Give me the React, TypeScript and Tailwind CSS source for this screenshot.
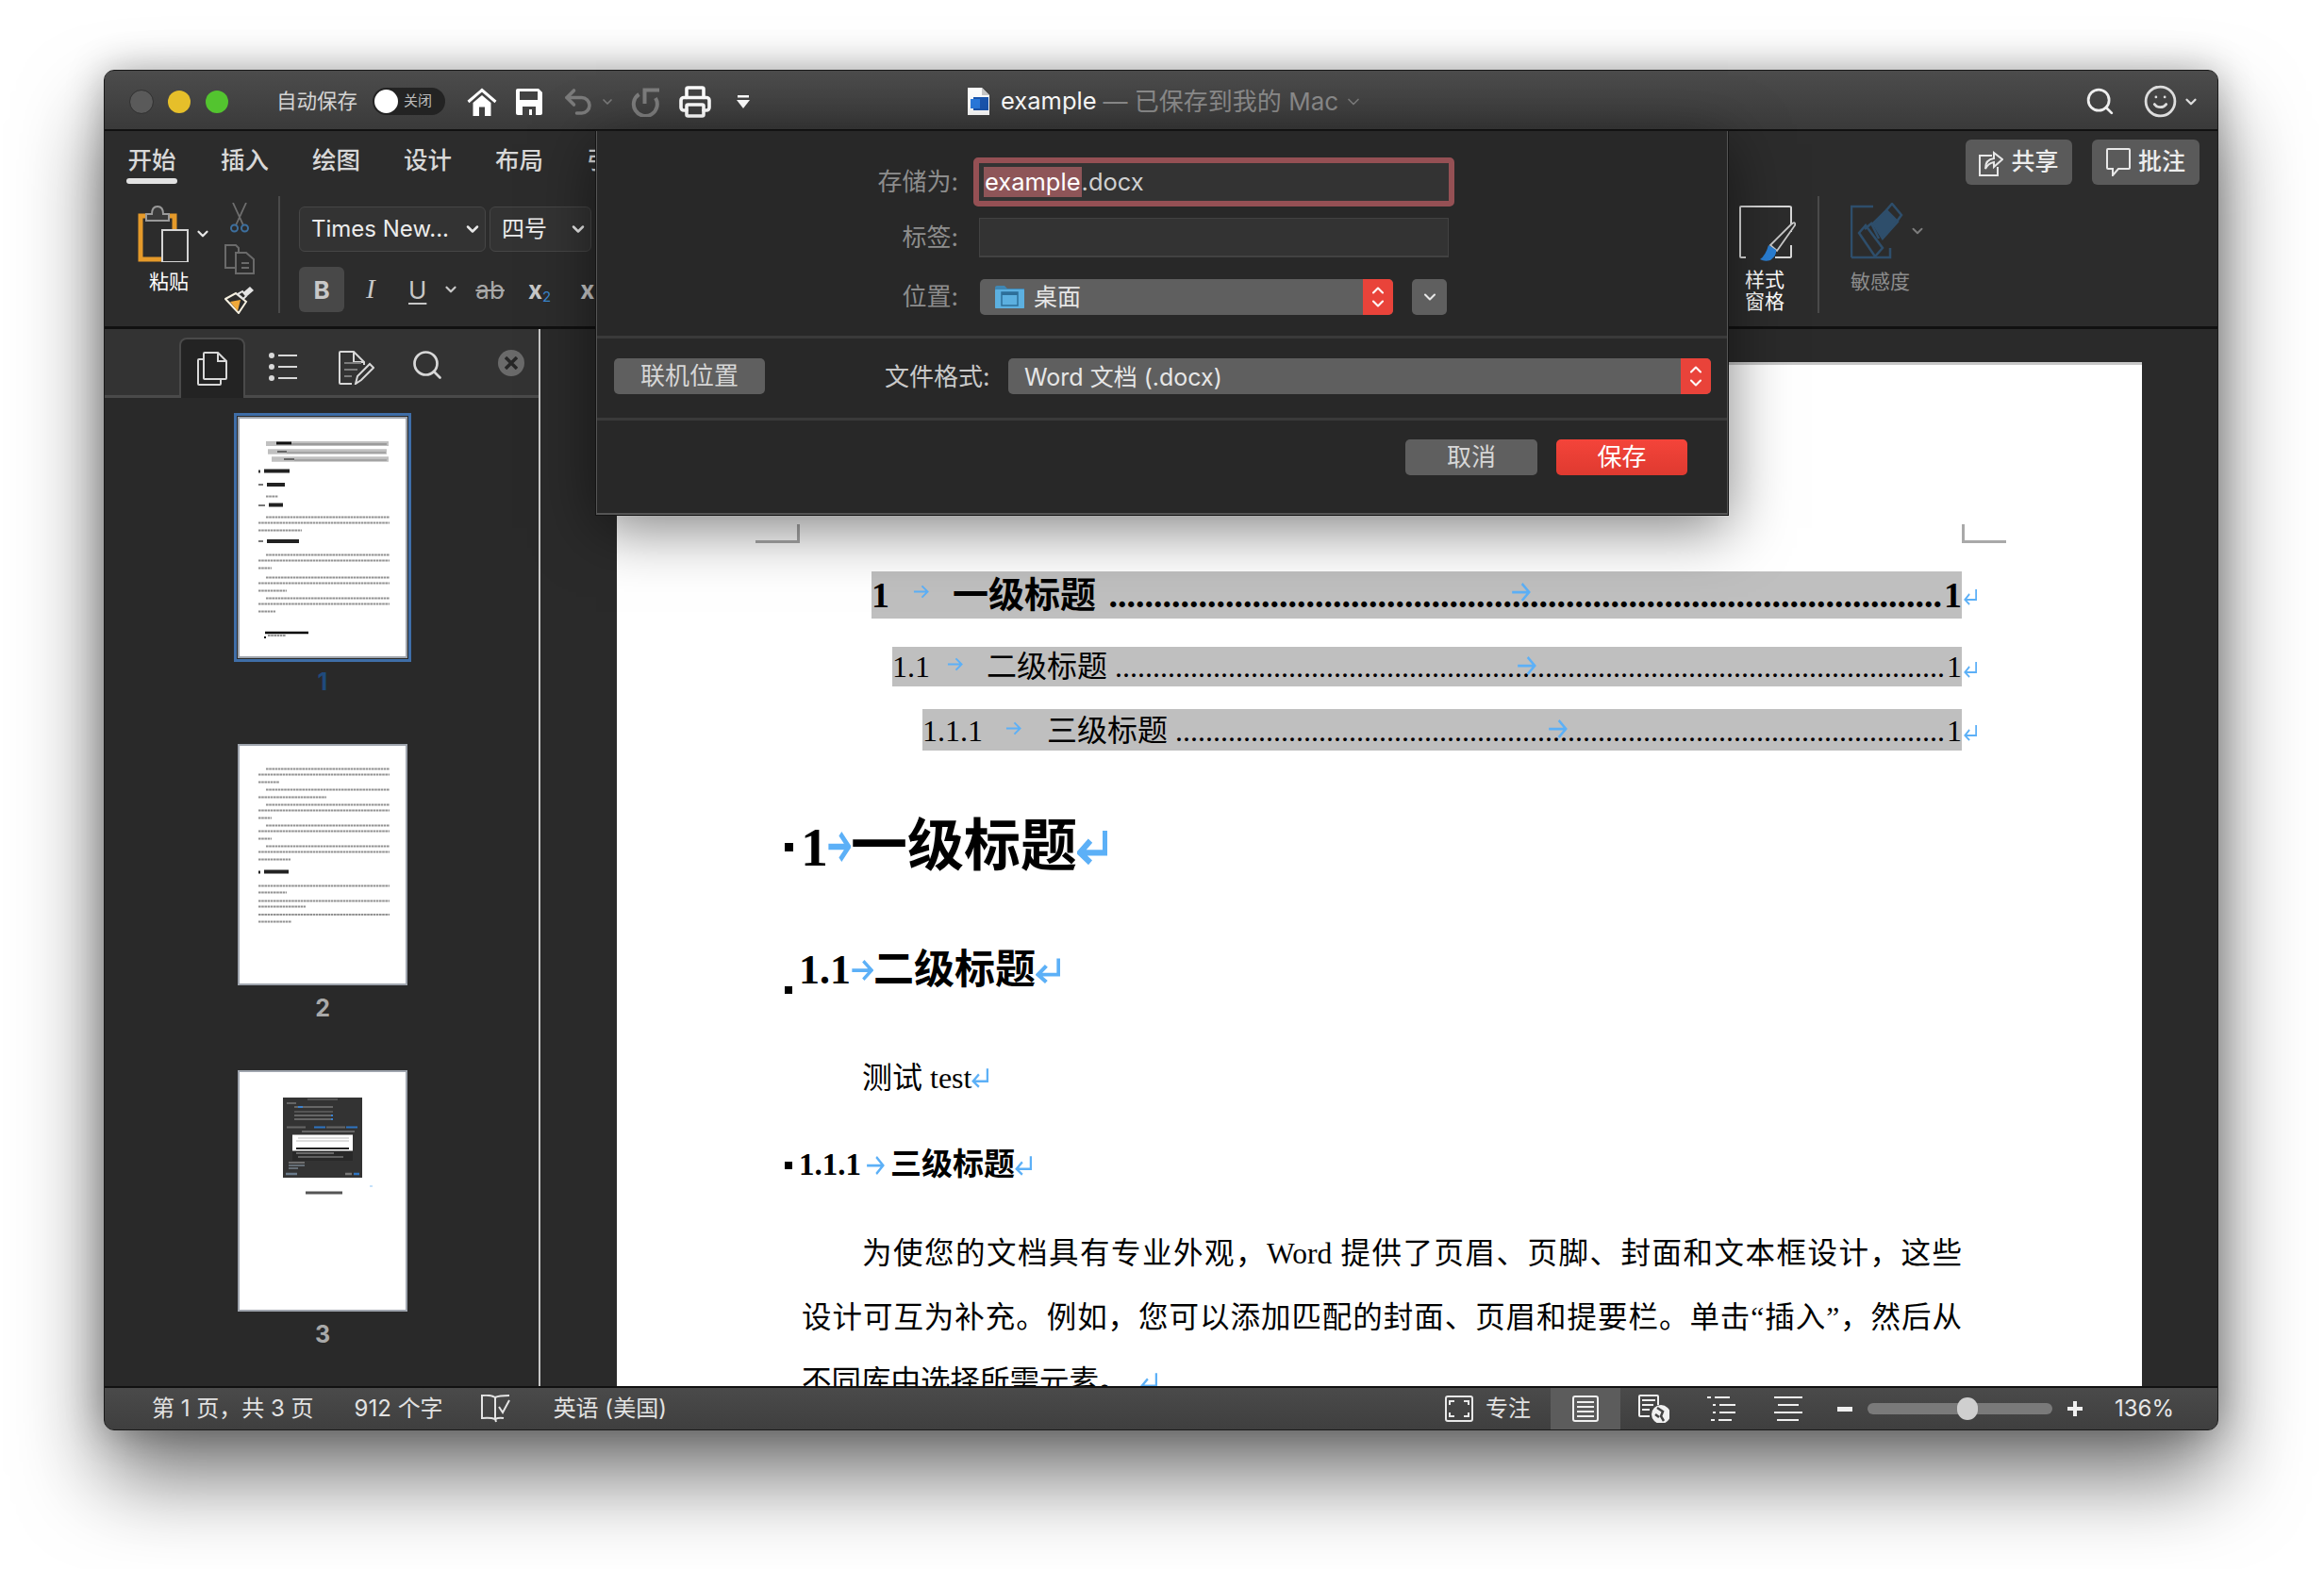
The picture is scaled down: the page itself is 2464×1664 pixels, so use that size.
import { ChevronDown, ChevronUp, Printer, Search, Smile, Undo2 } from "lucide-react";

const UI_FONT = "font-['Inter','Noto_Sans_CJK_SC',sans-serif]";
const DOC_FONT = "font-['Liberation_Serif','Noto_Sans_CJK_SC',serif]";

function TabArrow({ w = 18, h = 16, sw = 2 }: { w?: number; h?: number; sw?: number }) {
  return (
    <svg width={w} height={h} viewBox="0 0 18 16" className="shrink-0" fill="none" stroke="#5cb0f7" strokeWidth={sw} preserveAspectRatio="none">
      <path d="M1 8H16M10 1.5L16.5 8L10 14.5" />
    </svg>
  );
}

function ReturnArrow({ w = 16, h = 18, sw = 2 }: { w?: number; h?: number; sw?: number }) {
  return (
    <svg width={w} height={h} viewBox="0 0 16 18" className="shrink-0" fill="none" stroke="#5cb0f7" strokeWidth={sw} preserveAspectRatio="none">
      <path d="M15 1V12H2M7 6L1.5 12L7 17" />
    </svg>
  );
}

function HomeIcon() {
  return (
    <svg width="32" height="30" viewBox="0 0 32 30" className="shrink-0">
      <path d="M1.5 15L16 2.5L30.5 15" fill="none" stroke="#fff" strokeWidth="3" />
      <path d="M6.5 16L16 8L25.500 16V30H19V20.500H13V30H6.500Z" fill="#fff" />
    </svg>
  );
}

function SaveIcon() {
  return (
    <svg width="28" height="28" viewBox="0 0 28 28" className="shrink-0">
      <path d="M2 0H24L28 4V26A2 2 0 0 1 26 28H2A2 2 0 0 1 0 26V2A2 2 0 0 1 2 0Z" fill="#fff" />
      <rect x="4" y="3" width="19" height="9" fill="#424242" />
      <rect x="7" y="19" width="14" height="9" fill="#424242" />
      <rect x="14" y="22" width="3" height="6" fill="#fff" />
    </svg>
  );
}

function RedoIcon() {
  return (
    <svg width="32" height="32" viewBox="0 0 32 32" fill="none" stroke="#7d7d7d" strokeWidth="4" className="shrink-0">
      <path d="M31 3.500H15.500V18" />
      <path d="M9.500 8A12.500 12.500 0 1 0 27 12" />
    </svg>
  );
}

function DocIcon() {
  return (
    <svg width="23" height="29" viewBox="0 0 23 29" className="shrink-0">
      <path d="M0 0H15L23 8V29H0Z" fill="#fff" />
      <path d="M15 0L23 8H15Z" fill="#c9c9c9" />
      <rect x="6" y="10" width="16" height="14" fill="#1a56b0" />
      <rect x="3" y="12" width="10" height="10" fill="#2a7be0" />
    </svg>
  );
}

function PasteIcon() {
  return (
    <svg width="54" height="60" viewBox="0 0 54 60" className="shrink-0">
      <path d="M3 11H39V57H3Z" fill="none" stroke="#e59a2a" strokeWidth="5" />
      <path d="M9 16V9H15Q15 1 21 1Q27 1 27 9H33V16Z" fill="#3a3a3a" stroke="#9a9a9a" strokeWidth="2" />
      <rect x="26" y="26" width="27" height="34" fill="#2c2c2c" stroke="#d4d4d4" strokeWidth="2" />
    </svg>
  );
}

function ScissorsIcon() {
  return (
    <svg width="20" height="32" viewBox="0 0 20 32" fill="none" className="shrink-0">
      <path d="M3 0L14 24M17 0L6 24" stroke="#6e6e6e" strokeWidth="1.800" />
      <circle cx="4.500" cy="27" r="3.500" stroke="#3d6f9e" strokeWidth="2" />
      <circle cx="15.500" cy="27" r="3.500" stroke="#3d6f9e" strokeWidth="2" />
    </svg>
  );
}

function CopyIcon() {
  return (
    <svg width="32" height="32" viewBox="0 0 32 32" fill="none" stroke="#6a6a6a" strokeWidth="2" className="shrink-0">
      <path d="M12 25H1V1H12L15 4V9" />
      <path d="M12 9H23L31 16V31H12Z" fill="#2c2c2c" />
      <path d="M18 20H26M18 25H26" />
    </svg>
  );
}

function BrushIcon() {
  return (
    <svg width="32" height="30" viewBox="0 0 32 30" fill="none" className="shrink-0">
      <path d="M1 14L12 8L23 17L15 29Z" fill="#2c2c2c" stroke="#f5f0e0" strokeWidth="2" />
      <path d="M6 17L17 15L14 27Z" fill="#f0a93a" />
      <path d="M14 9L20 14L23 11L19 6Z" fill="#2c2c2c" stroke="#e4e4e4" strokeWidth="2" />
      <path d="M20 7L27 1L31 5L24 11Z" fill="#e4e4e4" />
    </svg>
  );
}

function StylePaneIcon() {
  return (
    <svg width="60" height="60" viewBox="0 0 60 60" fill="none" className="shrink-0">
      <path d="M7 55H2Q1 55 1 54V2Q1 1 2 1H53Q55 1 55 2V28M55 42V54Q55 55 53 55H38" stroke="#d8d8d8" strokeWidth="2" />
      <path d="M33 42L55 20Q60 16 59 21L40 48Z" fill="#2c2c2c" stroke="#c9c9c9" strokeWidth="1.800" />
      <path d="M31 42L39 47Q40 53 33 58Q27 60 22 57Q28 53 31 42Z" fill="#2a7fd4" />
    </svg>
  );
}

function SensitivityIcon() {
  return (
    <svg width="56" height="60" viewBox="0 0 56 60" fill="none" stroke="#2e4e6b" strokeWidth="2.500" className="shrink-0">
      <path d="M1 58H42V48M24 4H1V58" />
      <path d="M9 32L16 24L34 48L26 57Z" />
      <path d="M15 28L22 22L30 38" />
      <path d="M24 22L38 8L50 20L34 38Z" fill="#2e4e6b" />
      <path d="M38 8L44 1L54 13L49 20" />
    </svg>
  );
}

function PagesIcon() {
  return (
    <svg width="32" height="36" viewBox="0 0 32 36" fill="none" stroke="#d8d8d8" strokeWidth="2" className="shrink-0">
      <path d="M7 8H2Q1 8 1 9V34Q1 35 2 35H24Q25 35 25 34V29" />
      <path d="M8 1H22L31 10V28Q31 29 30 29H9Q7 29 7 28V2Q7 1 8 1Z" />
      <path d="M22 1V10H31" />
    </svg>
  );
}

function OutlineListIcon() {
  return (
    <svg width="30" height="32" viewBox="0 0 30 32" fill="#d8d8d8" className="shrink-0">
      <circle cx="3" cy="4" r="3" />
      <circle cx="3" cy="16" r="3" />
      <circle cx="3" cy="28" r="3" />
      <rect x="10" y="3" width="20" height="2" />
      <rect x="10" y="15" width="20" height="2" />
      <rect x="10" y="27" width="20" height="2" />
    </svg>
  );
}

function ReviewIcon() {
  return (
    <svg width="38" height="36" viewBox="0 0 38 36" fill="none" stroke="#d8d8d8" strokeWidth="2" className="shrink-0">
      <path d="M14 35H2Q1 35 1 34V2Q1 1 2 1H16L27 12V15" />
      <path d="M16 1V12H27" />
      <path d="M6 13H24M6 20H20M6 27H14" stroke="#7c7c7c" />
      <path d="M18 35L20 27L33 14L37 18L24 31Z" />
    </svg>
  );
}

function BookCheckIcon() {
  return (
    <svg width="31" height="30" viewBox="0 0 31 30" fill="none" stroke="#e4e4e4" strokeWidth="2" className="shrink-0">
      <path d="M15 26V3Q10 0 1 1V25Q10 24 15 26L16 29" />
      <path d="M15 3Q19 1 30 1M15 26Q19 24 24 25" />
      <path d="M19 13L23 19L30 6" />
    </svg>
  );
}

function FocusIcon() {
  return (
    <svg width="30" height="28" viewBox="0 0 30 28" fill="none" stroke="#e8e8e8" strokeWidth="2" className="shrink-0">
      <rect x="1" y="1" width="28" height="26" rx="2" />
      <path d="M5 10V6H10M20 6H25V10M25 18V22H20M10 22H5V18" />
    </svg>
  );
}

function PageViewIcon() {
  return (
    <svg width="28" height="28" viewBox="0 0 28 28" fill="none" stroke="#f0f0f0" strokeWidth="2" className="shrink-0">
      <rect x="1" y="1" width="26" height="26" rx="2" />
      <path d="M5 7H23M5 12H23M5 17H23M5 22H23" />
    </svg>
  );
}

function WebViewIcon() {
  return (
    <svg width="33" height="30" viewBox="0 0 33 30" fill="none" stroke="#f0f0f0" strokeWidth="2" className="shrink-0">
      <path d="M12 23H2Q1 23 1 22V2Q1 1 2 1H20Q21 1 21 2V11" />
      <path d="M4 6H18M4 11H16M4 16H12" />
      <circle cx="24" cy="21" r="9" fill="#f0f0f0" />
      <path d="M20 14L26 18L24 23L27 28M18 21L22 24" stroke="#444" strokeWidth="2.500" />
    </svg>
  );
}

function OutlineViewIcon() {
  return (
    <svg width="30" height="28" viewBox="0 0 30 28" fill="#f0f0f0" className="shrink-0">
      <rect x="0" y="1" width="4" height="2" />
      <rect x="8" y="1" width="16" height="2" />
      <rect x="6" y="9" width="3" height="2" />
      <rect x="13" y="9" width="17" height="2" />
      <rect x="6" y="17" width="3" height="2" />
      <rect x="13" y="17" width="17" height="2" />
      <rect x="4" y="25" width="4" height="2" />
      <rect x="12" y="25" width="14" height="2" />
    </svg>
  );
}

function DraftViewIcon() {
  return (
    <svg width="30" height="28" viewBox="0 0 30 28" fill="#f0f0f0" className="shrink-0">
      <rect x="0" y="1" width="30" height="2" />
      <rect x="4" y="9" width="22" height="2" />
      <rect x="0" y="17" width="30" height="2" />
      <rect x="3" y="25" width="23" height="2" />
    </svg>
  );
}

function Stepper() {
  return (
    <div className="w-[32px] h-full bg-[#e9433a] rounded-r-[5px] flex flex-col items-center justify-center text-white">
      <ChevronUp size={20} strokeWidth={2.5} className="-mb-[3px]" />
      <ChevronDown size={20} strokeWidth={2.5} className="-mt-[3px]" />
    </div>
  );
}

function Sel({ label, value }: { label: string; value: string }) {
  return (
    <div className={`h-[48px] border border-[#464646] bg-[#333333] rounded-[6px] flex items-center justify-between pl-[12px] pr-[3px] text-[24px] text-[#ececec] ${label}`}>
      <span className="whitespace-nowrap">{value}</span>
      <ChevronDown size={20} strokeWidth={3} className="text-[#e8e8e8]" />
    </div>
  );
}

type Seg = [number, number, number, string?, number?];

function Thumb({ segs }: { segs: Seg[] }) {
  return (
    <svg width="176" height="252" viewBox="0 0 176 252" className="block bg-white">
      {segs.map(([x1, x2, y, color, sw], i) => (
        <line
          key={i}
          x1={x1}
          x2={x2}
          y1={y}
          y2={y}
          stroke={color ?? "#929292"}
          strokeWidth={sw ?? 2}
          strokeDasharray={color ? undefined : "2.600 0.600"}
        />
      ))}
    </svg>
  );
}

const para = (ys: number[], last: number, x0 = 28): Seg[] =>
  ys.map((y, i) => [i === 0 ? x0 : 20, i === ys.length - 1 ? last : 159, y] as Seg);

const THUMB_1: Seg[] = [
  [28, 158, 26.5, "#c0c0c0", 5],
  [30, 156, 35, "#c0c0c0", 5.500],
  [34, 158, 43, "#c0c0c0", 5.500],
  [39, 55, 26, "#111", 3],
  [55, 156, 27, "#777", 1],
  [40, 50, 35, "#666", 2],
  [50, 155, 36, "#888", 1],
  [47, 58, 43, "#666", 2],
  [58, 156, 44, "#888", 1],
  [20, 22, 56, "#333", 3],
  [26, 53, 55.500, "#222", 4],
  [20, 25, 70, "#777", 2],
  [29, 48, 70, "#222", 4],
  [28, 41, 82.500],
  [20, 27, 92, "#777", 2],
  [31, 46, 91.500, "#222", 4],
  ...para([104.500, 110.500, 118.500], 66),
  [20, 25, 130, "#777", 2],
  [29, 63, 130, "#222", 4],
  ...para([144.500, 150.500, 158.500], 34),
  ...para([168.500, 174.500, 182.500], 50),
  ...para([190.500, 196.500, 204.500], 38),
  [27, 73, 227, "#000", 2.300],
  [26, 28, 232, "#000", 2],
  [30, 49, 230],
];

const THUMB_2: Seg[] = [
  ...para([24.500, 30.500, 38.500], 42),
  ...para([46.500, 54.500], 92),
  ...para([62.500, 68.500, 76.500], 34),
  ...para([84.500, 90.500, 98.500], 34),
  ...para([106.500, 112.500, 120.500], 54),
  [20, 22, 134, "#222", 3],
  [26, 52, 133.500, "#222", 4],
  ...para([148.500, 155.500], 50, 20),
  ...para([164.500, 170.500], 70, 20),
  ...para([179, 186.500], 55, 20),
];

const THUMB_3: Seg[] = [
  [46, 130, 69.500, "#333333", 85],
  [72, 104, 29, "#555", 2],
  [50, 60, 33, "#999", 1],
  [58, 99, 37, "#666", 2],
  [62, 67, 37, "#3b82d0", 2],
  [58, 99, 42, "#555", 2],
  [58, 99, 46, "#666", 2],
  [58, 99, 50, "#666", 2],
  [97, 99, 46, "#3b82d0", 2],
  [97, 99, 50, "#3b82d0", 2],
  [50, 70, 58.500, "#666", 2],
  [79, 91, 58.500, "#2f74c0", 2],
  [92, 112, 58.500, "#666", 2],
  [113, 125, 58.500, "#2f74c0", 2],
  [66, 122, 63, "#666", 2],
  [56, 120, 75, "#fff", 17],
  [62, 116, 70, "#bbb", 1],
  [60, 116, 73, "#bbb", 1],
  [60, 116, 81, "#222", 2],
  [56, 120, 89, "#292929", 10],
  [60, 100, 86, "#aaa", 1],
  [62, 110, 90, "#999", 1],
  [52, 69, 96, "#aaa", 1],
  [52, 69, 99, "#9ab", 1],
  [52, 62, 102, "#9ab", 1],
  [49, 61, 108, "#6a7a8a", 2.500],
  [112, 119, 108, "#777", 2.500],
  [121, 127, 108, "#2f74c0", 2.500],
  [70, 109, 128, "#555", 3],
  [138, 141, 121, "#8cc4f4", 1],
];

function Thumbnail({ segs, num, active }: { segs: Seg[]; num: string; active?: boolean }) {
  return (
    <div className="flex flex-col items-center">
      <div className={active ? "border-2 border-[#3f6ea8] p-[1px] -m-[3px]" : ""}>
        <div className={active ? "border border-[#3f6ea8] p-[1px] -m-[1px]" : ""}>
          <div className="border-2 border-[#9fa5ae]">
            <Thumb segs={segs} />
          </div>
        </div>
      </div>
      <div className={`mt-[8px] h-[32px] leading-[32px] text-[25px] font-bold ${active ? "text-[#1f4a7c]" : "text-[#a9a9a9]"}`}>
        {num}
      </div>
    </div>
  );
}

function TocRow({ bar, num, numW, arrowX, title, size, bold, tabAt, dots }: {
  bar: string;
  num: string;
  numW: number;
  arrowX: number;
  title: string;
  size: string;
  bold?: boolean;
  tabAt: number;
  dots: number;
}) {
  const weight = bold ? "font-bold" : "";
  return (
    <div className={`relative flex items-center whitespace-nowrap bg-[#bfbfbf] text-black ${size} ${weight} ${bar}`}>
      <div className="relative shrink-0" style={{ width: numW }}>
        {num}
        <span className="absolute top-[30%]" style={{ left: arrowX }}>
          <TabArrow w={17} h={15} />
        </span>
      </div>
      <span className="shrink-0">{title}</span>
      <span className="ml-auto mr-[2px]">{".".repeat(dots)}</span>
      <span className="shrink-0">1</span>
      <span className="absolute left-full ml-[2px] top-[36%]">
        <ReturnArrow w={14} h={18} />
      </span>
      <span className="absolute top-[22%]" style={{ left: tabAt }}>
        <TabArrow w={21} h={22} />
      </span>
    </div>
  );
}

function Dialog() {
  return (
    <div className="absolute left-[521px] top-[64px] w-[1200px] h-[407px] bg-[#282828] border-x border-b-2 border-[#555555] outline outline-1 outline-[#151515] shadow-[0_14px_60px_rgba(0,0,0,0.5)] z-10 text-[25px] leading-none">
      <div className="h-[220px] border-b-[3px] border-[#3a3a3a] pt-[28px]">
        <div className="flex items-center h-[52px]">
          <div className="w-[383px] text-right text-[#8d8d8d] text-[26px]">存储为:</div>
          <div className="ml-[16px] w-[510px] h-[52px] border-[6px] border-[#955054] rounded-[5px] bg-[#333333] pl-[5px] flex items-center text-[25.500px]">
            <span className="bg-[#8e5558] text-white h-[32px] leading-[32px] px-[1px]">example</span>
            <span className="text-[#d0d0d0]">.docx</span>
          </div>
        </div>
        <div className="flex items-center h-[42px] mt-[12px]">
          <div className="w-[383px] text-right text-[#8d8d8d] text-[26px]">标签:</div>
          <div className="ml-[22px] w-[498px] h-[42px] border border-[#424242] border-b-2 bg-[#333333]" />
        </div>
        <div className="flex items-center h-[38px] mt-[23px]">
          <div className="w-[383px] text-right text-[#8d8d8d] text-[26px]">位置:</div>
          <div className="ml-[23px] w-[438px] h-[38px] bg-[#5f5f5f] rounded-[5px] flex items-center pl-[16px]">
            <svg width="31" height="24" viewBox="0 0 31 24" className="shrink-0">
              <path d="M0 2Q0 0 2 0H10L13 3H31V24H0Z" fill="#3f87b4" />
              <rect x="0" y="4" width="31" height="20" fill="#5cb0e0" rx="1" />
              <rect x="7" y="7" width="17" height="14" fill="#5cb0e0" stroke="#2d6f99" strokeWidth="1.500" />
              <rect x="7" y="7" width="17" height="3" fill="#2d6f99" />
            </svg>
            <span className="ml-[10px] text-[#e6e6e6]">桌面</span>
            <div className="ml-auto h-full">
              <Stepper />
            </div>
          </div>
          <div className="ml-[20px] w-[37px] h-[38px] bg-[#5f5f5f] rounded-[5px] flex items-center justify-center text-[#e8e8e8]">
            <ChevronDown size={20} strokeWidth={2.5} />
          </div>
        </div>
      </div>
      <div className="h-[87px] border-b-[3px] border-[#3a3a3a] pt-[21px] flex items-start">
        <div className="ml-[18px] w-[160px] h-[38px] bg-[#5f5f5f] rounded-[5px] flex items-center justify-center text-[#d6d6d6] text-[26px]">
          联机位置
        </div>
        <div className="ml-[127px] w-[112px] h-[38px] flex items-center whitespace-nowrap text-[#c8c8c8] text-[26px] pt-[2px]">文件格式:</div>
        <div className="ml-[19px] w-[745px] h-[38px] bg-[#5f5f5f] rounded-[5px] flex items-center pl-[17px] text-[#e6e6e6]">
          <span className="pt-[2px]">Word 文档 (.docx)</span>
          <div className="ml-auto h-full">
            <Stepper />
          </div>
        </div>
      </div>
      <div className="pt-[20px] pr-[42px] flex justify-end gap-[20px] text-[26px]">
        <div className="w-[140px] h-[38px] bg-[#5f5f5f] rounded-[5px] flex items-center justify-center text-[#d6d6d6]">取消</div>
        <div className="w-[139px] h-[38px] bg-gradient-to-b from-[#f4443a] to-[#df3a30] rounded-[5px] flex items-center justify-center text-white">保存</div>
      </div>
    </div>
  );
}

function Page() {
  return (
    <div className={`relative w-[1617px] flex-1 min-h-0 overflow-hidden bg-white border-t-[3px] border-[#c8c8c8] pl-[196px] pr-[191px] pt-[219px] text-black ${DOC_FONT}`}>
      <div className="absolute left-[147px] top-[169px] w-[47px] h-[20px] border-r-[3px] border-b-[3px] border-[#a9a9a9]" />
      <div className="absolute left-[1426px] top-[169px] w-[47px] h-[20px] border-l-[3px] border-b-[3px] border-[#a9a9a9]" />

      <TocRow bar="ml-[74px] h-[50px]" num="1" numW={86} arrowX={44} title="一级标题" size="text-[38px]" bold tabAt={678} dots={93} />
      <TocRow bar="ml-[96px] mt-[30px] h-[42px]" num="1.1" numW={100} arrowX={58} title="二级标题" size="text-[32px]" tabAt={662} dots={110} />
      <TocRow bar="ml-[128px] mt-[24px] h-[44px] pt-[2px]" num="1.1.1" numW={132} arrowX={88} title="三级标题" size="text-[32px]" tabAt={663} dots={102} />

      <div className="mt-[62px] h-[80px] -ml-[18px] flex items-center font-bold text-[60px] whitespace-nowrap">
        <span className="w-[9px] h-[9px] bg-black mr-[10px]" />
        <span className="w-[26px] text-[58px] -ml-[2px] mr-[2px]">1</span>
        <TabArrow w={25} h={34} sw={3} />
        <span>一级标题</span>
        <ReturnArrow w={32} h={38} sw={3} />
      </div>

      <div className="mt-[61px] h-[60px] -ml-[18px] flex items-center font-bold text-[43px] whitespace-nowrap">
        <span className="w-[8px] h-[8px] bg-black mr-[10px] self-end mb-[5px]" />
        <span className="w-[52px] text-[44px] -ml-[3px] mr-[3px]">1.1</span>
        <TabArrow w={24} h={24} sw={2.500} />
        <span>二级标题</span>
        <ReturnArrow w={26} h={28} sw={2.500} />
      </div>

      <div className="mt-[60px] h-[48px] pl-[64px] flex items-center text-[32px] whitespace-nowrap">
        <span>测试&nbsp;test</span>
        <ReturnArrow w={18} h={22} />
      </div>

      <div className="mt-[45px] h-[48px] -ml-[18px] flex items-center font-bold text-[33px] whitespace-nowrap">
        <span className="w-[8px] h-[8px] bg-black mr-[7px]" />
        <span className="w-[71px]">1.1.1</span>
        <span className="mr-[6px]"><TabArrow w={20} h={22} /></span>
        <span>三级标题</span>
        <ReturnArrow w={18} h={22} />
      </div>

      <div className="mt-[36px] text-[31.500px] leading-[68px]">
        <div className="ml-[64px] whitespace-nowrap [text-align:justify] [text-align-last:justify]">
          为使您的文档具有专业外观，Word 提供了页眉、页脚、封面和文本框设计，这些
        </div>
        <div className="whitespace-nowrap [text-align:justify] [text-align-last:justify]">
          设计可互为补充。例如，您可以添加匹配的封面、页眉和提要栏。单击“插入”，然后从
        </div>
        <div className="flex items-center whitespace-nowrap">
          不同库中选择所需元素。
          <span className="ml-[12px]"><ReturnArrow w={18} h={22} /></span>
        </div>
      </div>
    </div>
  );
}

export default function App() {
  return (
    <div className={`w-[2464px] h-[1664px] bg-white pt-[75px] pl-[111px] overflow-hidden ${UI_FONT}`}>
      <div className="relative w-[2240px] h-[1441px] rounded-[10px] overflow-visible flex flex-col shadow-[0_50px_90px_rgba(0,0,0,0.55),0_0_40px_rgba(0,0,0,0.3)] bg-[#2a2a2a] outline outline-1 outline-[#1a1a1a]">
        {/* title bar */}
        <div className="h-[64px] shrink-0 pt-[3px] rounded-t-[10px] bg-gradient-to-b from-[#4c4c4c] to-[#3a3a3a] border-b-[2px] border-[#111111] flex items-center pl-[27px] text-white">
          <div className="flex gap-[16px]">
            <span className="w-[24px] h-[24px] rounded-full bg-[#5a5a5a] outline outline-1 outline-[#333333]" />
            <span className="w-[24px] h-[24px] rounded-full bg-[#e6bf2a]" />
            <span className="w-[24px] h-[24px] rounded-full bg-[#53c42f]" />
          </div>
          <span className="ml-[51px] text-[21.500px] text-[#d4d4d4] whitespace-nowrap">自动保存</span>
          <div className="ml-[16px] w-[77px] h-[29px] rounded-full bg-[#232323] flex items-center pl-[2px]">
            <span className="w-[25px] h-[25px] rounded-full bg-white" />
            <span className="ml-[6px] text-[15px] text-[#bdbdbd] whitespace-nowrap">关闭</span>
          </div>
          <div className="ml-[23px]"><HomeIcon /></div>
          <div className="ml-[20px]"><SaveIcon /></div>
          <Undo2 size={36} strokeWidth={2.400} className="ml-[20px] text-[#7b7b7b] shrink-0" />
          <ChevronDown size={16} strokeWidth={2.500} className="ml-[5px] text-[#7b7b7b] shrink-0" />
          <div className="ml-[16px]"><RedoIcon /></div>
          <Printer size={36} strokeWidth={2.400} className="ml-[19px] text-white shrink-0" />
          <svg width="14" height="14" viewBox="0 0 14 14" className="ml-[26px] shrink-0" fill="#fff">
            <rect x="1" y="0" width="12" height="2.500" />
            <path d="M0 5H14L7 14Z" />
          </svg>
          <div className="ml-[231px]"><DocIcon /></div>
          <span className="ml-[12px] text-[25.500px] whitespace-nowrap">example</span>
          <span className="ml-[7px] text-[26px] text-[#8b8b8b] whitespace-nowrap">— 已保存到我的 Mac</span>
          <ChevronDown size={20} strokeWidth={2} className="ml-[6px] text-[#7d7d7d] shrink-0" />
          <Search size={33} strokeWidth={2} className="ml-auto shrink-0 text-[#eeeeee]" />
          <Smile size={37} strokeWidth={1.800} className="ml-[29px] text-[#dddddd] shrink-0" />
          <ChevronDown size={18} strokeWidth={3} className="ml-[5px] mr-[19px] text-[#dddddd] shrink-0" />
        </div>

        {/* ribbon */}
        <div className="h-[210px] shrink-0 bg-[#2c2c2c] border-b-[3px] border-[#111111] text-[#e8e8e8]">
          <div className="h-[69px] flex justify-between items-start">
            <div className="flex gap-[46px] pl-[23px] pt-[12px] text-[25.500px] font-medium text-[#d8d8d8] leading-[38px] whitespace-nowrap">
              {["开始", "插入", "绘图", "设计", "布局", "引用"].map((t, i) => (
                <div key={t} className="flex flex-col items-center">
                  <span>{t}</span>
                  {i === 0 && <span className="w-[54px] h-[6px] rounded-full bg-[#e2e2e2]" />}
                </div>
              ))}
            </div>
            <div className="flex gap-[21px] pt-[9px] pr-[19px] text-[25px] font-medium text-[#ededed]">
              <div className="w-[113px] h-[48px] bg-[#5a5a5a] rounded-[6px] flex items-center justify-center gap-[8px]">
                <svg width="26" height="30" viewBox="0 0 26 30" fill="none" stroke="#e8e8e8" strokeWidth="2" className="shrink-0">
                  <path d="M14 8H1V29H20V20" />
                  <path d="M7 22Q7 12 16 11V5L25 12L16 20V15Q10 16 7 22Z" />
                </svg>
                <span>共享</span>
              </div>
              <div className="w-[114px] h-[48px] bg-[#5a5a5a] rounded-[6px] flex items-center justify-center gap-[8px]">
                <svg width="26" height="30" viewBox="0 0 26 30" fill="none" stroke="#e8e8e8" strokeWidth="2" className="shrink-0">
                  <path d="M2 1H24Q25 1 25 2V21Q25 22 24 22H13L7 29V22H2Q1 22 1 21V2Q1 1 2 1Z" />
                </svg>
                <span>批注</span>
              </div>
            </div>
          </div>

          <div className="h-[124px] flex items-start whitespace-nowrap">
            <div className="w-[1733px] shrink-0 flex items-start">
              <div className="w-[186px] shrink-0 h-[124px] flex items-start border-r-2 border-[#4a4a4a]">
                <div className="ml-[35px] mt-[10px] w-[70px] shrink-0 relative">
                  <PasteIcon />
                  <ChevronDown size={18} strokeWidth={3} className="absolute left-[60px] top-[21px]" />
                  <div className="ml-[12px] mt-[8px] text-[21px] leading-[26px] text-white">粘贴</div>
                </div>
                <div className="ml-[22px] w-[32px] shrink-0 flex flex-col items-center pt-[7px] gap-[12px]">
                  <ScissorsIcon />
                  <CopyIcon />
                  <BrushIcon />
                </div>
              </div>
              <div className="ml-[20px] pt-[11px] flex flex-col gap-[16px]">
                <div className="flex gap-[4px]">
                  <Sel label="w-[198px]" value="Times New..." />
                  <Sel label="w-[108px]" value="四号" />
                </div>
                <div className="flex items-center text-[26px] text-[#c8c8c8] h-[48px]">
                  <div className="w-[48px] h-[48px] rounded-[6px] bg-[#484848] flex items-center justify-center font-bold text-[26px]">B</div>
                  <span className="ml-[23px] w-[14px] font-['Liberation_Serif',serif] italic text-[29px]">I</span>
                  <span className="ml-[31px] underline underline-offset-[4px]">U</span>
                  <ChevronDown size={18} strokeWidth={3} className="ml-[17px] shrink-0" />
                  <span className="ml-[17px] line-through text-[#a8a8a8]">ab</span>
                  <span className="ml-[25px] font-bold">x</span>
                  <span className="text-[15px] text-[#3a86cc] self-end mb-[5px]">2</span>
                  <span className="ml-[31px] font-bold">x</span>
                </div>
              </div>
            </div>

            <div className="w-[85px] shrink-0 h-[124px] border-r-2 border-[#4a4a4a] pt-[10px]">
              <StylePaneIcon />
              <div className="mt-[7px] w-[54px] text-center text-[21px] leading-[23px] text-white whitespace-normal">样式窗格</div>
            </div>
            <div className="ml-[33px] pt-[7px] text-[#8c8c8c]">
              <div className="flex items-center">
                <SensitivityIcon />
                <ChevronDown size={18} strokeWidth={2.500} className="ml-[6px] text-[#7d7d7d]" />
              </div>
              <div className="mt-[11px] text-[21px] leading-[26px]">敏感度</div>
            </div>
          </div>
        </div>

        {/* body */}
        <div className="flex-1 min-h-0 flex">
          <div className="w-[462px] shrink-0 border-r-2 border-[#c6c6c6] bg-[#292929] flex flex-col">
            <div className="h-[73px] shrink-0 bg-[#333333] border-b-[3px] border-[#4a4a4a] flex items-end pl-[79px]">
              <div className="w-[70px] h-[64px] -mb-[3px] bg-[#232323] border-2 border-b-0 border-[#4a4a4a] rounded-t-[8px] flex items-center justify-center">
                <PagesIcon />
              </div>
              <div className="ml-[25px] mb-[14px]"><OutlineListIcon /></div>
              <div className="ml-[44px] mb-[11px]"><ReviewIcon /></div>
              <Search size={36} strokeWidth={1.800} className="ml-[38px] mb-[14px] text-[#d8d8d8]" />
              <div className="ml-[57px] mb-[20px] w-[28px] h-[28px] rounded-full bg-[#6a6a6a] flex items-center justify-center">
                <svg width="14" height="14" viewBox="0 0 14 14" stroke="#262626" strokeWidth="3.500">
                  <path d="M1 1L13 13M13 1L1 13" />
                </svg>
              </div>
            </div>
            <div className="flex-1 min-h-0 overflow-hidden flex flex-col items-center gap-[50px] pt-[19px] pl-[2px]">
              <Thumbnail segs={THUMB_1} num="1" active />
              <Thumbnail segs={THUMB_2} num="2" />
              <Thumbnail segs={THUMB_3} num="3" />
            </div>
          </div>
          <div className="flex-1 min-w-0 bg-[#2a2a2a] pl-[81px] pt-[35px] flex flex-col">
            <Page />
          </div>
        </div>

        {/* status bar */}
        <div className="h-[46px] shrink-0 rounded-b-[10px] bg-gradient-to-b from-[#4a4a4a] to-[#3f3f3f] border-t-2 border-[#111111] flex items-center text-[24px] text-[#e2e2e2] whitespace-nowrap">
          <span className="ml-[50px]">第 1 页，共 3 页</span>
          <span className="ml-[43px]">912 个字</span>
          <div className="ml-[40px]"><BookCheckIcon /></div>
          <span className="ml-[46px]">英语 (美国)</span>
          <div className="ml-auto flex items-center h-full">
            <FocusIcon />
            <span className="ml-[13px]">专注</span>
            <div className="ml-[21px] w-[74px] h-full bg-[#5c5c5c] flex items-center justify-center"><PageViewIcon /></div>
            <div className="ml-[19px]"><WebViewIcon /></div>
            <div className="ml-[40px]"><OutlineViewIcon /></div>
            <div className="ml-[41px]"><DraftViewIcon /></div>
            <span className="ml-[37px] w-[16px] h-[5px] bg-[#f0f0f0]" />
            <div className="relative ml-[16px] w-[196px] h-[12px] rounded-full bg-[#7a7a7a]">
              <span className="absolute left-[95px] -top-[6px] w-[22px] h-[24px] rounded-full bg-[#cfcfcf]" />
            </div>
            <span className="relative ml-[16px] w-[16px] h-[16px] flex items-center">
              <span className="w-[16px] h-[4px] bg-[#f0f0f0]" />
              <span className="absolute left-[6px] top-0 w-[4px] h-[16px] bg-[#f0f0f0]" />
            </span>
            <span className="ml-[34px] mr-[46px] text-[#e6e6e6]">136%</span>
          </div>
        </div>

        <Dialog />
      </div>
    </div>
  );
}
